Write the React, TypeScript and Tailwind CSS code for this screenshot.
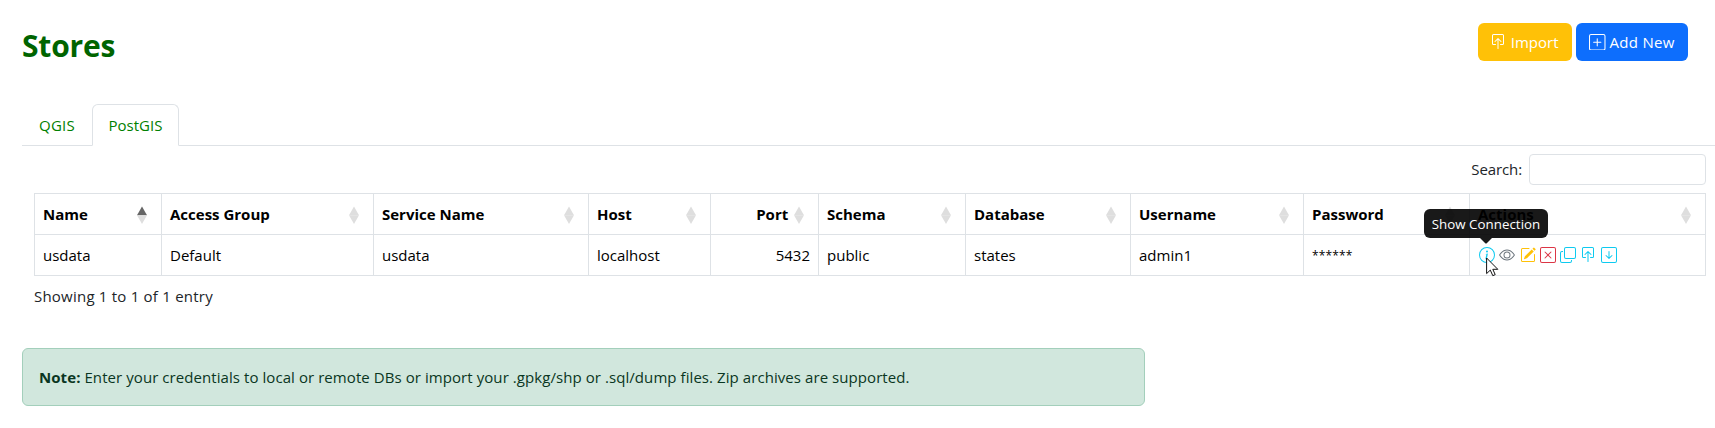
import type { ReactNode } from 'react';
import {
  BsArrowDownSquare,
  BsBoxArrowInUp,
  BsCopy,
  BsEye,
  BsInfoCircle,
  BsPencilSquare,
  BsPlusSquare,
  BsXSquare,
} from 'react-icons/bs';

type Column = { label: string; width: string; value: ReactNode; numeric?: boolean; sorted?: boolean };

function SortIcon({ sorted }: { sorted?: boolean }) {
  return (
    <svg width="10" height="18" viewBox="0 0 10 18" className="mt-px shrink-0">
      <path d="M5 0.400L10 9.200H0z" fill={sorted ? '#666666' : '#dedede'} />
      <path d="M0 9.200H10L5 18z" fill="#dedede" />
    </svg>
  );
}

function Pointer() {
  return (
    <svg width="13" height="20" viewBox="0 0 13 20" className="absolute left-[7px] top-[10px] z-20">
      <path d="M.6 1v15.6l3.7-3.5 2.5 5.6 2.4-1.1-2.4-5.3h5z" fill="#fff" stroke="#111" strokeWidth="1" />
    </svg>
  );
}

function Actions() {
  return (
    <div className="flex items-center gap-[4.25px] pl-px text-[16px] text-[#0dcaf0]">
      <span className="relative">
        <BsInfoCircle />
        <span className="absolute -left-[55px] -top-[38px] z-10 flex h-[29px] w-[124px] items-center justify-center whitespace-nowrap rounded-md bg-black/90 text-[13.3px] tracking-[0.04px] text-white">
          Show Connection
          <svg width="12" height="6" viewBox="0 0 12 6" className="absolute left-[56px] top-[29px]">
            <path d="M0 0H12L6.500 5.500H5.500z" fill="#000" fillOpacity="0.9" />
          </svg>
        </span>
        <Pointer />
      </span>
      <BsEye className="text-[#6c757d]" />
      <BsPencilSquare className="text-[#ffc107]" />
      <BsXSquare className="text-[#dc3545]" />
      <BsCopy />
      <BsBoxArrowInUp />
      <BsArrowDownSquare />
    </div>
  );
}

const columns: Column[] = [
  { label: 'Name', width: 'w-[127px]', value: 'usdata', sorted: true },
  { label: 'Access Group', width: 'w-[212px]', value: 'Default' },
  { label: 'Service Name', width: 'w-[215px]', value: 'usdata' },
  { label: 'Host', width: 'w-[122px]', value: 'localhost' },
  { label: 'Port', width: 'w-[108px]', value: '5432', numeric: true },
  { label: 'Schema', width: 'w-[147px]', value: 'public' },
  { label: 'Database', width: 'w-[165px]', value: 'states' },
  { label: 'Username', width: 'w-[173px]', value: 'admin1' },
  { label: 'Password', width: 'w-[166px]', value: <span className="text-[12px] tracking-[0.15px]">******</span> },
  { label: 'Actions', width: 'w-[236px]', value: <Actions /> },
];

export default function App() {
  return (
    <main className="h-[428px] overflow-hidden bg-white pl-[22px] font-['Open_Sans','Noto_Sans',sans-serif] text-[15px] leading-6 text-[#212529]">
      <header className="flex h-[104px] items-start justify-between pr-[27px] pt-[23px]">
        <h1 className="pt-1 text-[30px] font-bold leading-[38px] tracking-[-0.2px] text-[#006400]">Stores</h1>
        <div className="flex gap-1 text-[15px] text-white">
          <button className="flex h-[38px] w-[94px] items-center gap-1 rounded-md bg-[#ffc107] pl-3">
            <BsBoxArrowInUp className="text-[16px]" />
            <span className="pl-[0.8px]">Import</span>
          </button>
          <button className="flex h-[38px] w-[112px] items-center gap-1 rounded-md bg-[#0d6efd] pl-[13px] tracking-[0.3px]">
            <BsPlusSquare className="text-[16.5px]" />
            Add New
          </button>
        </div>
      </header>

      <nav className="flex h-[42px] border-b border-[#dee2e6] text-[#008000]">
        <a className="flex h-[42px] w-[70px] items-center justify-center tracking-[0.2px]">QGIS</a>
        <a className="flex h-[42px] w-[87px] items-center justify-center rounded-t-md border border-b-white border-[#dee2e6] bg-white">PostGIS</a>
      </nav>

      <section className="pl-3 pt-2">
        <div className="flex w-[1672px] items-center justify-end gap-[7px]">
          <label htmlFor="search" className="pb-0.5 tracking-[-0.1px]">Search:</label>
          <input id="search" className="h-[31px] w-[177px] rounded border border-[#dee2e6] bg-white px-2 outline-none" />
        </div>
        <table className="mt-2 w-[1672px] table-fixed border-collapse text-black">
          <thead>
            <tr className="h-[41px]">
              {columns.map((c) => (
                <th key={c.label} className={`border border-[#dee2e6] p-0 pl-2 pr-[13.8px] text-left font-bold ${c.width}`}>
                  <div className={`flex items-center gap-1.5 ${c.numeric ? 'justify-end' : 'justify-between'}`}>
                    {c.label}
                    <SortIcon sorted={c.sorted} />
                  </div>
                </th>
              ))}
            </tr>
          </thead>
          <tbody>
            <tr className="h-[41px]">
              {columns.map((c) => (
                <td key={c.label} className={`border border-[#dee2e6] p-0 px-2 ${c.numeric ? 'text-right' : 'text-left'}`}>
                  {c.value}
                </td>
              ))}
            </tr>
          </tbody>
        </table>
        <p className="pt-2 tracking-[0.22px]">Showing 1 to 1 of 1 entry</p>
      </section>

      <div className="mt-10 flex h-[58px] w-[1123px] items-center whitespace-pre rounded-md border border-[#a3cfbb] bg-[#d1e7dd] px-4 tracking-[0.07px] text-[#0a3622]">
        <strong className="font-bold">Note:</strong> Enter your credentials to local or remote DBs or import your .gpkg/shp or .sql/dump files. Zip archives are supported.
      </div>
    </main>
  );
}
